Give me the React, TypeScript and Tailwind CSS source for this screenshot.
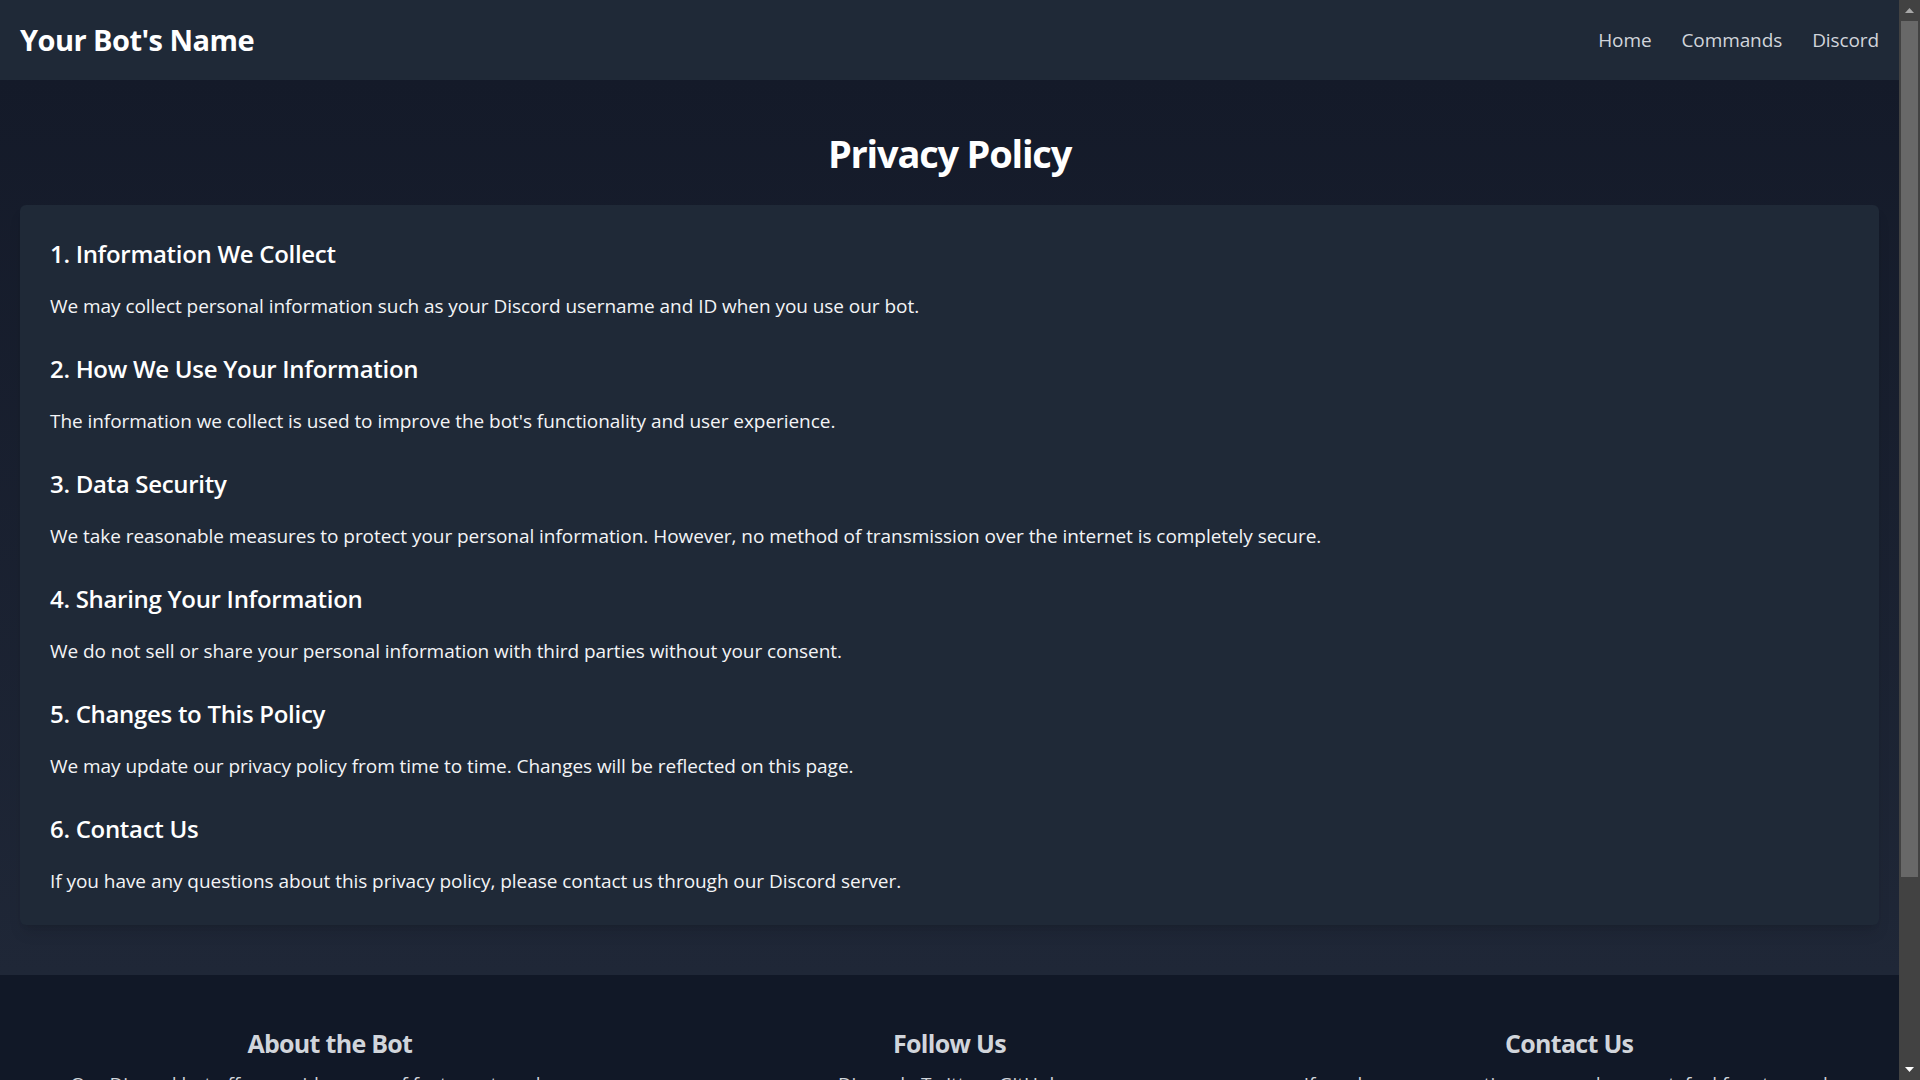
import React from "react";

const sections = [
  {
    title: "1. Information We Collect",
    body: "We may collect personal information such as your Discord username and ID when you use our bot.",
  },
  {
    title: "2. How We Use Your Information",
    body: "The information we collect is used to improve the bot's functionality and user experience.",
  },
  {
    title: "3. Data Security",
    body: "We take reasonable measures to protect your personal information. However, no method of transmission over the internet is completely secure.",
  },
  {
    title: "4. Sharing Your Information",
    body: "We do not sell or share your personal information with third parties without your consent.",
  },
  {
    title: "5. Changes to This Policy",
    body: "We may update our privacy policy from time to time. Changes will be reflected on this page.",
  },
  {
    title: "6. Contact Us",
    body: "If you have any questions about this privacy policy, please contact us through our Discord server.",
  },
];

function Scrollbar() {
  return (
    <aside className="flex h-screen w-[21px] shrink-0 flex-col bg-[#424242]">
      <div className="flex h-[21px] items-center justify-center">
        <svg width="9" height="5" viewBox="0 0 9 5">
          <path d="M0 5 L4.5 0 L9 5 Z" fill="#a8a8a8" />
        </svg>
      </div>
      <div className="mx-[2px] h-[856px] bg-[#686868]" />
      <div className="flex-1" />
      <div className="flex h-[21px] items-center justify-center">
        <svg width="9" height="5" viewBox="0 0 9 5">
          <path d="M0 0 L9 0 L4.5 5 Z" fill="#ffffff" />
        </svg>
      </div>
    </aside>
  );
}

export default function App() {
  return (
    <div className="flex h-screen overflow-hidden bg-[#111827] font-['Open_Sans','Noto_Sans',sans-serif]">
      <div className="h-screen min-w-0 flex-1 overflow-hidden">
        <header className="flex h-20 items-center justify-between bg-[#1f2937] px-5">
          <div className="text-[29px] font-bold leading-[40px] tracking-[-0.55px] text-white">
            Your Bot's Name
          </div>
          <nav className="flex gap-[30px] text-[19px] leading-[28px] tracking-[-0.1px] text-[#d1d5db]">
            <a href="#">Home</a>
            <a href="#">Commands</a>
            <a href="#">Discord</a>
          </nav>
        </header>

        <main className="bg-linear-to-b from-[#141a29] to-[#1f2737] px-5 pt-[49px] pb-[50px]">
          <h1 className="text-center text-[38px] font-bold leading-[48px] tracking-[-1.2px] text-white">
            Privacy Policy
          </h1>
          <div className="mt-[28px] rounded-[6px] bg-[#1f2937] px-[30px] pt-[33px] pb-[29px] shadow-lg">
            {sections.map((s, i) => (
              <section key={s.title} className={i < sections.length - 1 ? "mb-[32px]" : ""}>
                <h2 className="mb-[21px] text-[24px] font-semibold leading-[32px] tracking-[-0.3px] text-white">
                  {s.title}
                </h2>
                <p className="text-[19px] leading-[30px] tracking-[-0.05px] text-[#f3f4f6]">{s.body}</p>
              </section>
            ))}
          </div>
        </main>

        <footer className="min-h-[335px] bg-[#111827] px-5 pt-[52px] pb-10">
          <div className="grid grid-cols-3">
            <div className="px-[30px] text-center">
              <h3 className="mb-[10px] text-[25px] font-bold leading-[32px] tracking-[-0.7px] text-[#d1d5db]">
                About the Bot
              </h3>
              <p className="text-[19px] leading-[30px] tracking-[-0.05px] text-[#d1d5db]">
                Our Discord bot offers a wide range of features to enhance your server experience and keep your community engaged.
              </p>
            </div>
            <div className="px-[30px] text-center">
              <h3 className="mb-[10px] text-[25px] font-bold leading-[32px] tracking-[-0.7px] text-[#d1d5db]">
                Follow Us
              </h3>
              <p className="flex justify-center gap-[16px] text-[19px] leading-[30px] tracking-[-0.05px] text-[#d1d5db]">
                <a href="#">Discord</a>
                <a href="#">Twitter</a>
                <a href="#">GitHub</a>
              </p>
            </div>
            <div className="px-[30px] text-center">
              <h3 className="mb-[10px] text-[25px] font-bold leading-[32px] tracking-[-0.7px] text-[#d1d5db]">
                Contact Us
              </h3>
              <p className="text-[19px] leading-[30px] tracking-[-0.05px] text-[#d1d5db]">
                If you have any questions or need support, feel free to reach out to us on our Discord server.
              </p>
            </div>
          </div>
          <div className="mt-10 text-center text-[16px] text-[#9ca3af]">
            © 2024 Your Bot's Name. All rights reserved.
          </div>
        </footer>
      </div>
      <Scrollbar />
    </div>
  );
}
